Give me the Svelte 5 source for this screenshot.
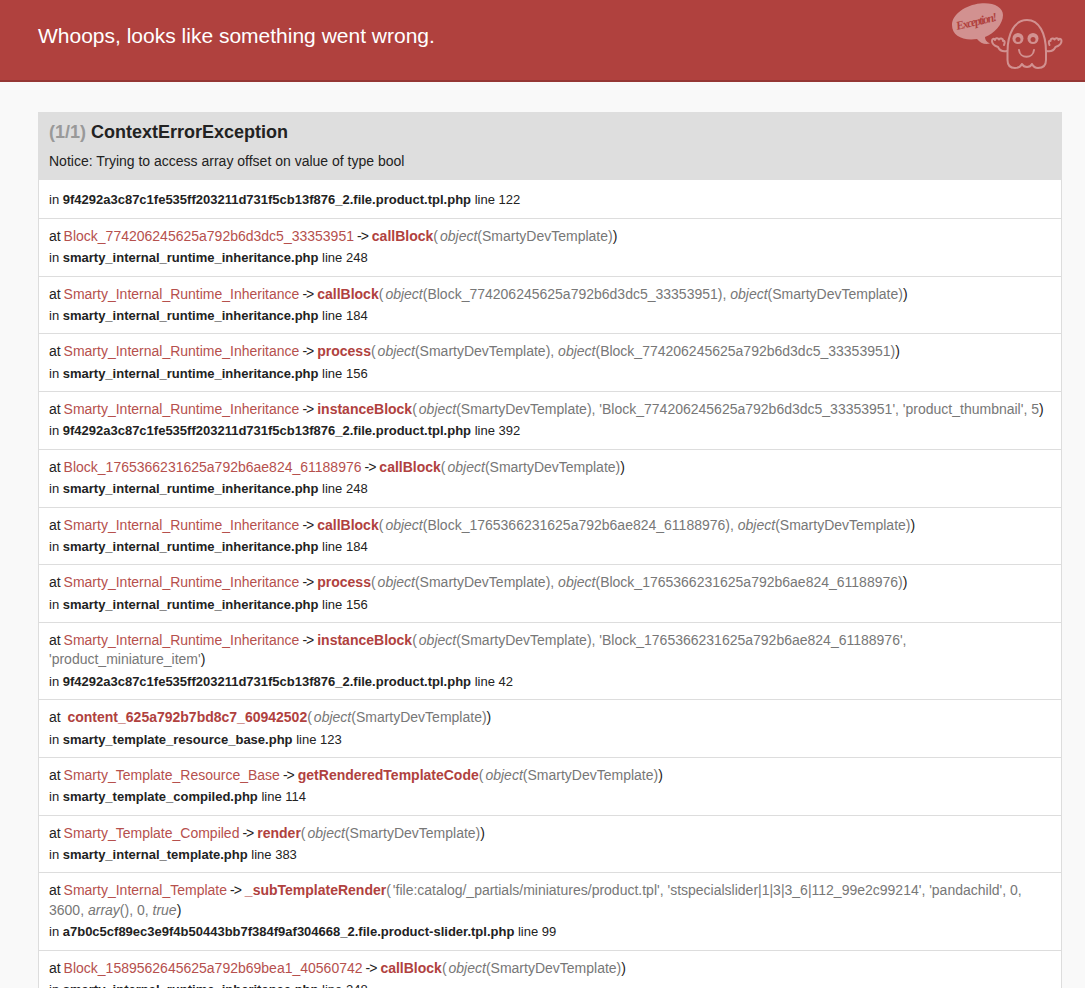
<script lang="ts">
	const A = '9f4292a3c87c1fe535ff203211d731f5cb13f876_2.file.product.tpl.php';
	const B = 'smarty_internal_runtime_inheritance.php';
	const S = '<em>object</em>(SmartyDevTemplate)';
	const inh = 'Smarty_Internal_Runtime_Inheritance';
	const b1 = 'Block_774206245625a792b6d3dc5_33353951';
	const b2 = 'Block_1765366231625a792b6ae824_61188976';

	const traces = [
		{ cls: b1, fn: 'callBlock', args: S, file: B, line: 248 },
		{ cls: inh, fn: 'callBlock', args: `<em>object</em>(${b1}), ${S}`, file: B, line: 184 },
		{ cls: inh, fn: 'process', args: `${S}, <em>object</em>(${b1})`, file: B, line: 156 },
		{ cls: inh, fn: 'instanceBlock', args: `${S}, '${b1}', 'product_thumbnail', 5`, file: A, line: 392 },
		{ cls: b2, fn: 'callBlock', args: S, file: B, line: 248 },
		{ cls: inh, fn: 'callBlock', args: `<em>object</em>(${b2}), ${S}`, file: B, line: 184 },
		{ cls: inh, fn: 'process', args: `${S}, <em>object</em>(${b2})`, file: B, line: 156 },
		{ cls: inh, fn: 'instanceBlock', args: `${S}, '${b2}', 'product_miniature_item'`, file: A, line: 42 },
		{ cls: '', fn: 'content_625a792b7bd8c7_60942502', args: S, file: 'smarty_template_resource_base.php', line: 123 },
		{ cls: 'Smarty_Template_Resource_Base', fn: 'getRenderedTemplateCode', args: S, file: 'smarty_template_compiled.php', line: 114 },
		{ cls: 'Smarty_Template_Compiled', fn: 'render', args: S, file: 'smarty_internal_template.php', line: 383 },
		{ cls: 'Smarty_Internal_Template', fn: '_subTemplateRender', args: `'file:catalog/_partials/miniatures/product.tpl', 'stspecialslider|1|3|3_6|112_99e2c99214', 'pandachild', 0, 3600, <em>array</em>(), 0, <em>true</em>`, file: 'a7b0c5cf89ec3e9f4b50443bb7f384f9af304668_2.file.product-slider.tpl.php', line: 99 },
		{ cls: 'Block_1589562645625a792b69bea1_40560742', fn: 'callBlock', args: S, file: B, line: 248 }
	];
</script>

<header class="summary">
	<div class="container">
		<h1>Whoops, looks like something went wrong.</h1>
		<svg class="ghost" viewBox="0 0 155 81" width="155" height="81" aria-hidden="true">
			<path class="bubble" d="M22 25C22 14 36 5 50 3.5C63 2 73 7 73 15C73 24 64 34 55 37C55 40 56.5 42 60 43.5C55 45 50 43 47 39C33 41 22 36 22 25z" />
			<text class="say" x="27" y="30" textLength="42" transform="rotate(-13 27 30)">Exception!</text>
			<g class="line">
				<path d="M77.5 52C77.5 33 85 20 97 20C109 20 116 33 116 52L116 60C116 66 112 68 108 68C105 68 103 66 102 64C100 68 94 68 92 64C91 66 88 68 85 68C81 68 77.5 66 77.5 60z" />
				<path d="M77 51C73 52 70 51 68 47C65 46 62 44 62 41C62 39 64 38 65 40C65 38 68 37.5 69 39.5C70 38 73 38 73 41C75 40 75 43 74 45" />
				<path d="M116.5 51C120.5 52 123.5 51 125.5 47C128.5 46 131.5 44 131.5 41C131.5 39 129.5 38 128.5 40C128.5 38 125.5 37.5 124.5 39.5C123.5 38 120.5 38 120.5 41C118.5 40 118.5 43 119.5 45" />
				<path d="M89 50C90 59 103 59 104 50" />
			</g>
			<circle class="eye" cx="88" cy="38.5" r="5.5" />
			<circle class="eye" cx="103" cy="38.5" r="5.5" />
			<circle class="pupil" cx="88" cy="39.5" r="2.5" />
			<circle class="pupil" cx="103" cy="39.5" r="2.5" />
		</svg>
	</div>
</header>

<main class="container">
	<section class="box">
		<div class="head">
			<h2><span class="count">(1/1)</span> ContextErrorException</h2>
			<p>Notice: Trying to access array offset on value of type bool</p>
		</div>
		<div class="row">
			<div class="file">in <strong>{A}</strong> line 122</div>
		</div>
		{#each traces as t}
			<div class="row">
				<div class="at">
					at {#if t.cls}<span class="cls">{t.cls}</span><span class="arrow">-&gt;</span>{:else}&nbsp;{/if}<strong class="fn" class:solo={!t.cls}>{t.fn}</strong><span class="args"><span class="open">(</span>{@html t.args}</span>)
				</div>
				<div class="file">in <strong>{t.file}</strong> line {t.line}</div>
			</div>
		{/each}
	</section>
</main>

<style>
	:global(body) {
		background: #f9f9f9;
		color: #222;
		font: 13px/19.375px Arial, "Liberation Sans", Helvetica, sans-serif;
		height: 988px;
		overflow: hidden;
	}

	.container {
		position: relative;
		width: 1024px;
		padding: 0 23px 0 38px;
	}

	.summary {
		background: #b0413e;
		border-bottom: 2px solid rgba(0, 0, 0, 0.15);
		height: 80px;
		margin-bottom: 30px;
	}

	h1 {
		margin: 0;
		color: #fff;
		font-size: 21px;
		font-weight: 400;
		line-height: 72px;
	}

	.ghost {
		position: absolute;
		top: 0;
		right: 0;
	}

	.bubble {
		fill: #d29190;
	}

	.say {
		fill: #b0413e;
		font: italic 700 12px "Liberation Serif", serif;
	}

	.line {
		fill: none;
		stroke: #d29190;
		stroke-width: 2;
		stroke-linecap: round;
		stroke-linejoin: round;
	}

	.eye {
		fill: #d29190;
	}

	.pupil {
		fill: #b0413e;
	}

	.box {
		border: 1px solid #ddd;
		border-top: 0;
		background: #fff;
	}

	.head {
		background: #dedede;
		margin: 0 -1px;
		padding: 8px 11px;
		height: 68.4px;
		box-sizing: border-box;
	}

	h2 {
		margin: 0;
		font-size: 18px;
		line-height: 24px;
		color: #222;
	}

	.count {
		color: #999;
	}

	.head p {
		margin: 8px 0 0;
		font-size: 14px;
		line-height: 19px;
	}

	.row {
		padding: 8px 10px;
		border-bottom: 1px solid #ddd;
	}

	.at {
		font-size: 14px;
	}

	.file {
		margin-top: 2px;
	}

	.cls {
		color: #b6504d;
		margin-left: -1px;
	}

	.arrow {
		margin: 0 4px 0 3px;
		letter-spacing: -1px;
	}

	.fn {
		color: #b0413e;
	}

	.solo {
		margin-left: -1px;
	}

	.args {
		color: #777;
	}

	.open {
		margin-right: 2px;
	}
</style>
